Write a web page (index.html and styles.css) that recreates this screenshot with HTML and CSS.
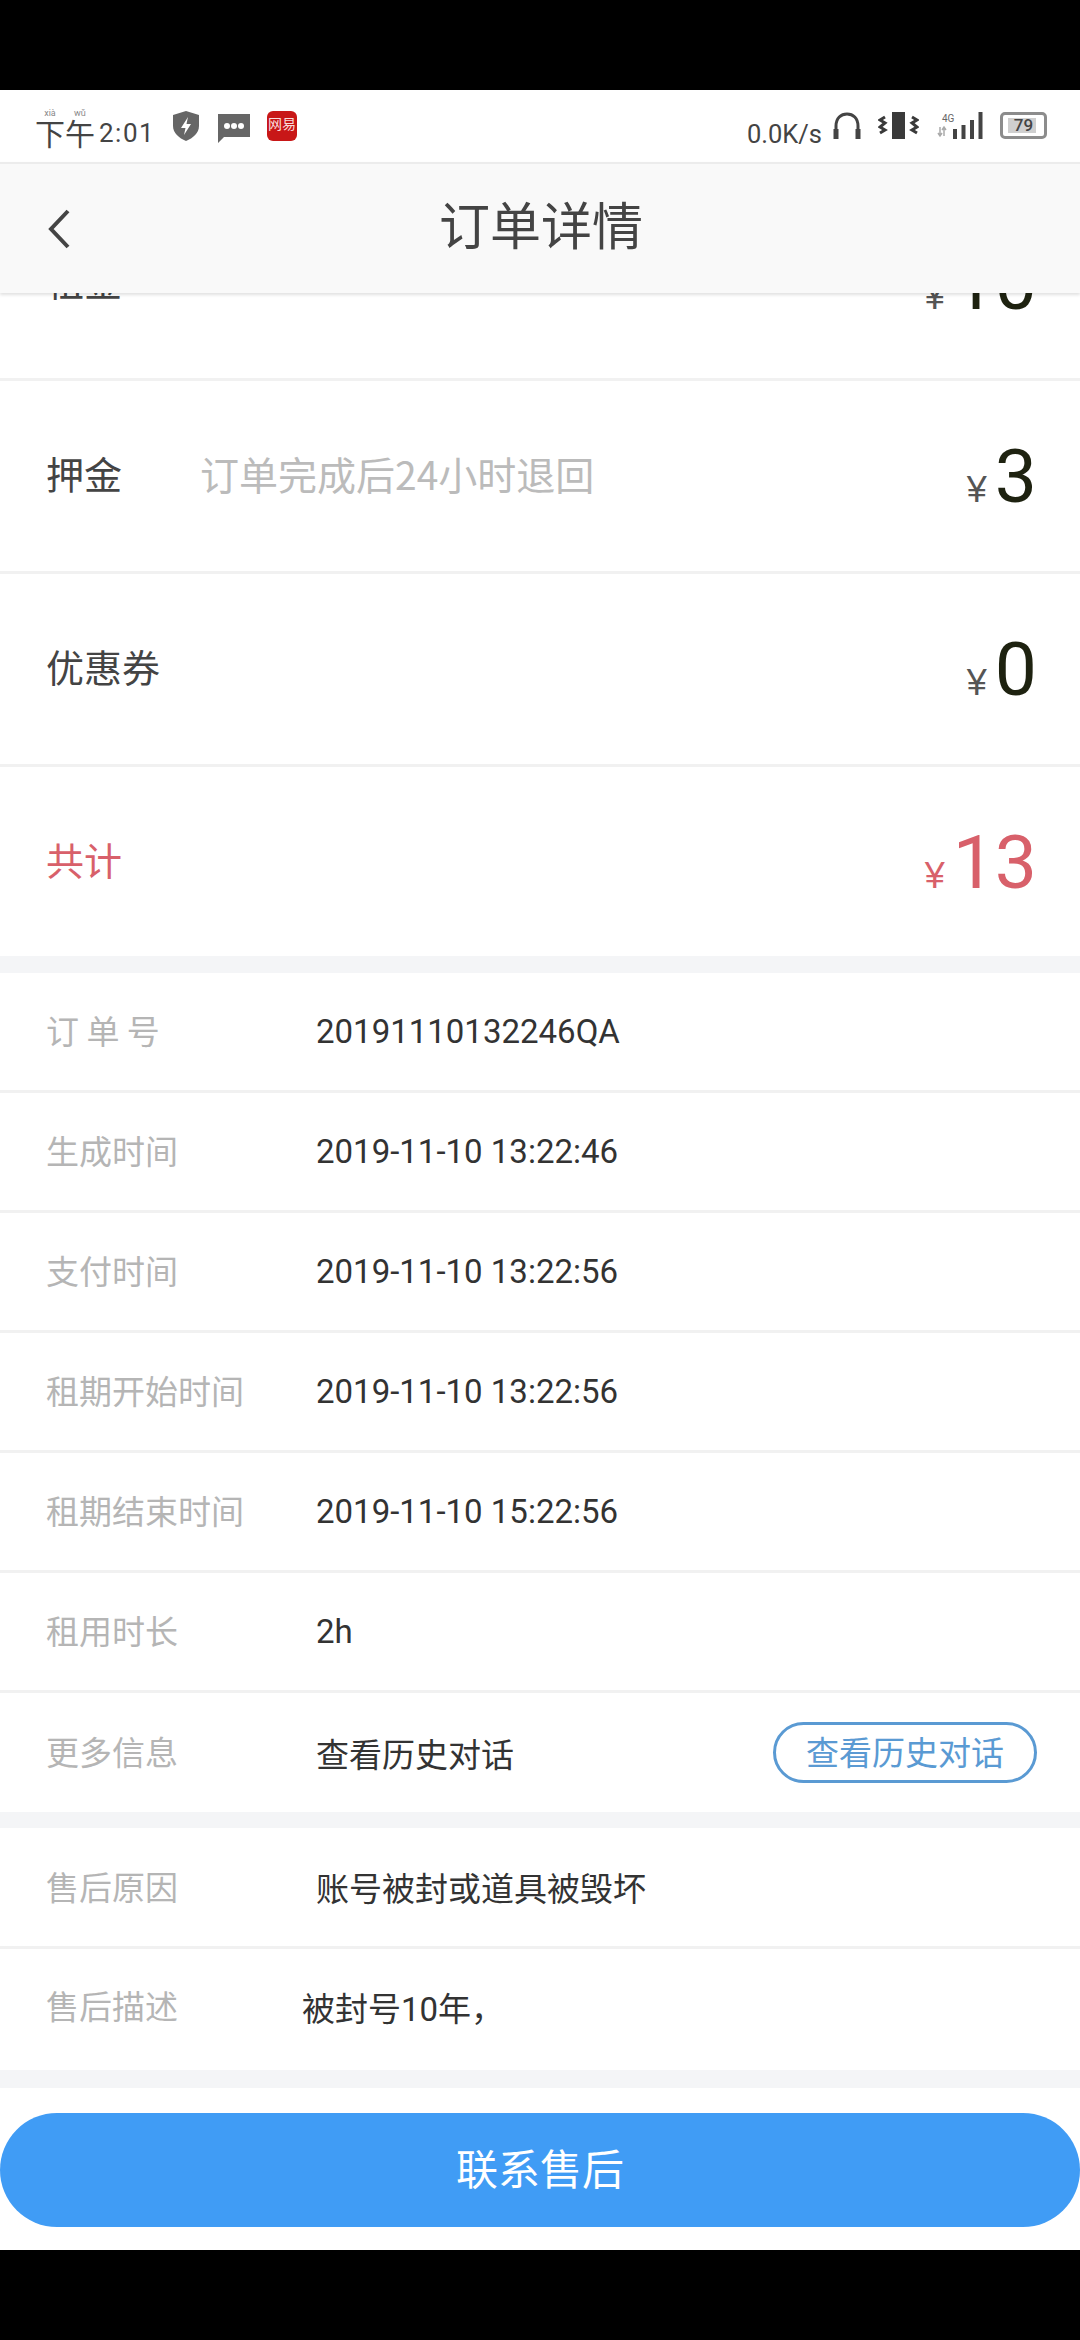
FILE: index.html
```html
<!DOCTYPE html>
<html lang="zh">
<head>
<meta charset="utf-8">
<title>订单详情</title>
<link rel="stylesheet" href="styles.css">
</head>
<body>
<div class="screen">
  <div class="statusbar">
    <div class="sb-left">
      <div class="time">
        <span class="zh"><ruby>下<rt>xià</rt></ruby><ruby>午<rt>wǔ</rt></ruby></span><span class="clock">2:01</span>
      </div>
      <svg class="ic-shield" width="26" height="30" viewBox="0 0 26 30"><path d="M13 0 L26 4 V15 C26 22 20 27 13 30 C6 27 0 22 0 15 V4 Z" fill="#666"/><path d="M15 6 L8 17 H12.5 L11 24 L18 13 H13.5 Z" fill="#fff"/></svg>
      <svg class="ic-msg" width="32" height="29" viewBox="0 0 32 29"><path d="M0 0 H32 V23 H6 L0 29 Z" fill="#666"/><circle cx="9" cy="12" r="3" fill="#fff"/><circle cx="16" cy="12" r="3" fill="#fff"/><circle cx="23" cy="12" r="3" fill="#fff"/></svg>
      <div class="ic-app"><span>网易</span></div>
    </div>
    <div class="sb-right">
      <span class="speed">0.0K/s</span>
      <svg class="ic-head" width="28" height="27" viewBox="0 0 28 27"><path d="M3 26 V14 C3 6 8 2 14 2 C20 2 25 6 25 14 V26" fill="none" stroke="#444" stroke-width="3"/><rect x="0.5" y="17" width="5" height="10" fill="#444"/><rect x="22.5" y="17" width="5" height="10" fill="#444"/></svg>
      <svg class="ic-vib" width="41" height="27" viewBox="0 0 41 27"><rect x="14" y="0" width="13" height="27" fill="#3a3a3a"/><path d="M7 5 L2 8 L7 11 L2 15 L7 18 L2 21" fill="none" stroke="#3a3a3a" stroke-width="3"/><path d="M34 5 L39 8 L34 11 L39 15 L34 18 L39 21" fill="none" stroke="#3a3a3a" stroke-width="3"/></svg>
      <div class="signal">
        <span class="net">4G</span>
        <svg width="49" height="27" viewBox="0 0 49 27"><path d="M3 15 V24 M7 15 V24 M1 21 L3 24 L5 21 M5 18 L7 15 L9 18" fill="none" stroke="#aaa" stroke-width="1.5"/><rect x="16" y="17" width="4" height="10" fill="#444"/><rect x="24.5" y="13" width="4" height="14" fill="#444"/><rect x="33" y="8" width="4" height="19" fill="#444"/><rect x="41.5" y="0" width="4" height="27" fill="#444"/></svg>
      </div>
      <div class="battery"><div class="batt-fill"></div><span class="batt-num">79</span></div>
    </div>
  </div>

  <header class="navbar">
    <svg class="back" width="24" height="42" viewBox="0 0 24 42"><path d="M21 3 L4 21 L21 39" fill="none" stroke="#444" stroke-width="4"/></svg>
    <h1 class="title">订单详情</h1>
  </header>

  <main class="content">
    <section class="prices">
      <div class="price-row clipped">
        <span class="p-label">租金</span>
        <span class="amount"><span class="yen">¥</span><span class="num">10</span></span>
      </div>
      <div class="price-row">
        <span class="p-label">押金</span><span class="hint">订单完成后24小时退回</span>
        <span class="amount"><span class="yen">¥</span><span class="num">3</span></span>
      </div>
      <div class="price-row">
        <span class="p-label">优惠券</span>
        <span class="amount"><span class="yen">¥</span><span class="num">0</span></span>
      </div>
      <div class="price-row total">
        <span class="p-label">共计</span>
        <span class="amount"><span class="yen">¥</span><span class="num">13</span></span>
      </div>
    </section>

    <section class="group">
      <div class="info-row"><span class="i-label">订 单 号</span><span class="i-value">20191110132246QA</span></div>
      <div class="info-row"><span class="i-label">生成时间</span><span class="i-value">2019-11-10 13:22:46</span></div>
      <div class="info-row"><span class="i-label">支付时间</span><span class="i-value">2019-11-10 13:22:56</span></div>
      <div class="info-row"><span class="i-label">租期开始时间</span><span class="i-value">2019-11-10 13:22:56</span></div>
      <div class="info-row"><span class="i-label">租期结束时间</span><span class="i-value">2019-11-10 15:22:56</span></div>
      <div class="info-row"><span class="i-label">租用时长</span><span class="i-value">2h</span></div>
      <div class="info-row last"><span class="i-label">更多信息</span><span class="i-value">查看历史对话</span><span class="pill">查看历史对话</span></div>
    </section>

    <section class="group">
      <div class="info-row second"><span class="i-label">售后原因</span><span class="i-value">账号被封或道具被毁坏</span></div>
      <div class="info-row last tall"><span class="i-label">售后描述</span><span class="i-value desc">被封号10年，</span></div>
    </section>

    <div class="footer"><button class="contact">联系售后</button></div>
  </main>
</div>
</body>
</html>
```

FILE: styles.css
```css
* { box-sizing: border-box; }
html, body { margin: 0; padding: 0; }
body {
  background: #000;
  font-family: Roboto, "Noto Sans CJK SC", sans-serif;
  width: 1080px;
  height: 2340px;
  overflow: hidden;
}
.screen {
  margin-top: 90px;
  height: 2160px;
  background: #fff;
  display: flex;
  flex-direction: column;
  overflow: hidden;
}

/* status bar */
.statusbar {
  height: 72px;
  flex: none;
  display: flex;
  justify-content: space-between;
  padding: 0 33px 0 35px;
  background: #fff;
}
.sb-left, .sb-right { display: flex; align-items: flex-start; }
.time { display: flex; flex: none; align-items: flex-end; height: 60px; color: #444; width: 116px; margin-right: 22px; white-space: nowrap; }
.zh { flex: none; font-family: "Noto Sans CJK SC", sans-serif; font-size: 30px; line-height: 36px; white-space: nowrap; }
.zh ruby { ruby-position: over; }
.zh rt { font-size: 9px; color: #888; line-height: 10px; font-family: Roboto, sans-serif; }
.clock { flex: none; font-size: 26px; line-height: 34px; letter-spacing: 1.5px; margin-left: 4px; }
.ic-shield { margin-top: 21px; margin-right: 19px; }
.ic-msg { margin-top: 24px; margin-right: 17px; }
.ic-app {
  margin-top: 21px;
  width: 30px; height: 30px;
  border-radius: 6px;
  background: #c81717;
  color: #f8dcdc;
  display: flex; align-items: flex-start; justify-content: center;
}
.ic-app span { font-family: "Noto Sans CJK SC", sans-serif; font-size: 14px; line-height: 24px; white-space: nowrap; }
.speed { font-size: 25.5px; line-height: 30px; color: #444; margin-top: 29px; margin-right: 11px; }
.ic-head { margin-top: 22px; margin-right: 17px; }
.ic-vib { margin-top: 22px; margin-right: 18px; }
.signal { position: relative; margin-top: 22px; margin-right: 14px; width: 49px; height: 27px; }
.net { position: absolute; left: 5px; top: 1px; font-size: 10px; line-height: 11px; color: #666; }
.battery {
  position: relative;
  margin-top: 22px;
  width: 47px; height: 27px;
  border: 3px solid #8c8c8c;
  border-radius: 5px;
  padding: 3px;
}
.batt-fill { width: 79%; height: 100%; background: #cfcfcf; margin-left: 2px; }
.batt-num {
  position: absolute; left: 0; right: 0; top: 0;
  text-align: center;
  font-size: 17px; line-height: 21px; font-weight: 500; color: #444;
}

/* nav */
.navbar {
  position: relative;
  z-index: 2;
  height: 131px;
  flex: none;
  background: #f9f9f9;
  border-top: 2px solid #ececec;
  box-shadow: 0 2px 3px rgba(0,0,0,.12);
  display: flex;
  align-items: center;
  justify-content: center;
  padding-bottom: 12px;
}
.back { position: absolute; left: 47px; top: 44px; }
.title {
  margin: 0 0 0 2px;
  font-family: "Noto Sans CJK SC", sans-serif;
  font-weight: 400;
  font-size: 51px;
  line-height: 60px;
  color: #444;
}

/* content */
.content { flex: 1; display: flex; flex-direction: column; overflow: hidden; background: #f4f5f7; }
.prices { background: #fff; }
.price-row {
  height: 193px;
  padding: 0 43px 6px 46px;
  display: flex;
  align-items: center;
  border-bottom: 3px solid #f1f1f1;
  font-family: "Noto Sans CJK SC", sans-serif;
}
.price-row.clipped { margin-top: -105px; }
.price-row.total { border-bottom: 0; height: 189px; }
.p-label { font-size: 38px; color: #444; line-height: 48px; }
.hint { font-size: 39px; color: #bbb; line-height: 48px; margin-left: 78px; }
.amount { margin-left: auto; margin-top: 6px; display: flex; align-items: baseline; }
.yen { font-family: "Liberation Sans", sans-serif; font-size: 36px; color: #555; margin-right: 8px; }
.num { font-family: Roboto, sans-serif; font-weight: 400; font-size: 75px; line-height: 88px; color: #1e2210; }
.total .p-label, .total .yen, .total .num { color: #d8606a; }

.group { background: #fff; margin-top: 16px; }
.prices + .group { margin-top: 17px; }
.info-row {
  height: 120px;
  padding: 0 43px 0 46px;
  display: flex;
  align-items: center;
  border-bottom: 3px solid #f1f1f1;
  font-size: 33px;
}
.info-row.second { height: 121px; }
.info-row.last { border-bottom: 0; height: 119px; }
.info-row.tall { height: 121px; padding-bottom: 6px; }
.i-label {
  width: 270px;
  flex: none;
  color: #b5b5b5;
  font-family: "Noto Sans CJK SC", sans-serif;
  white-space: pre;
  margin-bottom: 3px;
}
.i-value { color: #333; font-family: Roboto, "Noto Sans CJK SC", sans-serif; }
.i-value.desc { margin-left: -14px; }
.pill {
  margin-left: auto;
  width: 264px; height: 61px;
  border: 3px solid #5a9ad3;
  border-radius: 31px;
  color: #5a9ad3;
  font-family: "Noto Sans CJK SC", sans-serif;
  font-size: 33px;
  line-height: 53px;
  text-align: center;
}

.footer { flex: 1; margin-top: 18px; background: #fff; padding-top: 25px; }
.contact {
  display: block;
  width: 1080px;
  height: 114px;
  border: 0;
  padding: 0 0 7px;
  border-radius: 57px;
  background: #409cf5;
  color: #fff;
  font-family: "Noto Sans CJK SC", sans-serif;
  font-size: 42px;
}
```
